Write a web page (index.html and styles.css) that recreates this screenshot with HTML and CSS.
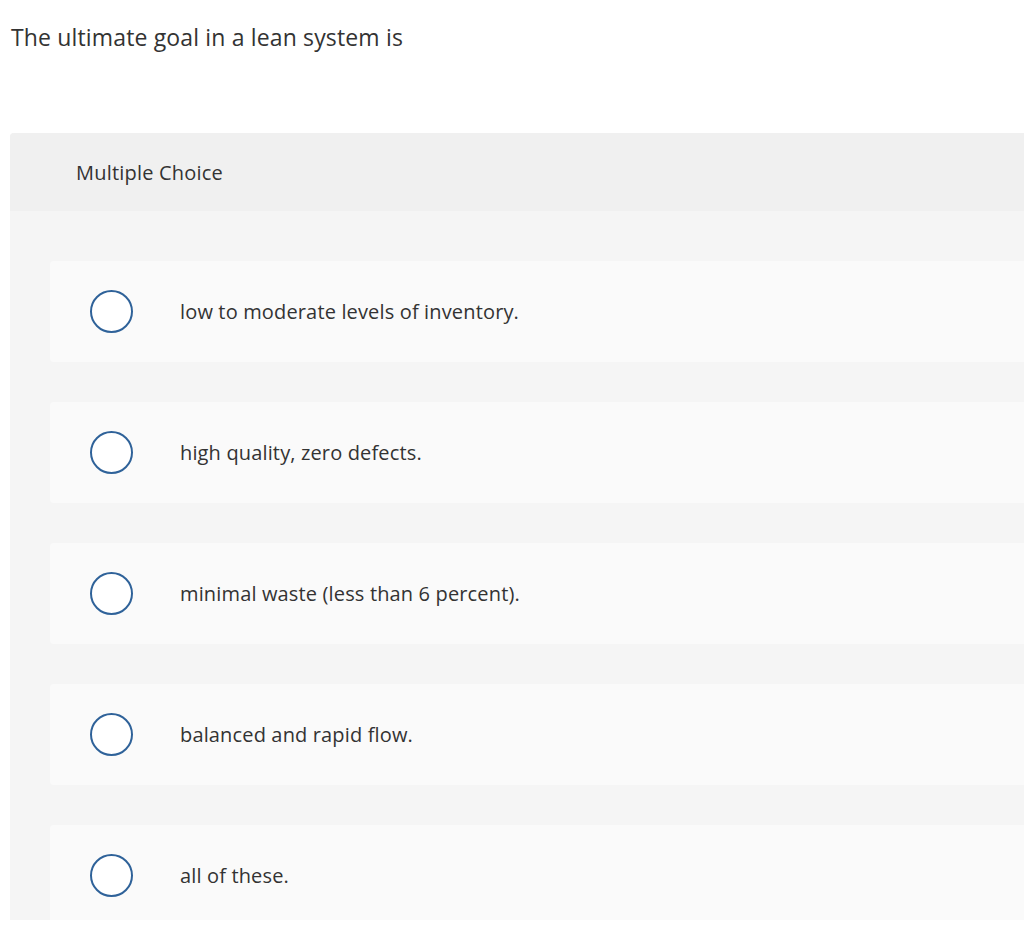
FILE: index.html
```html
<!DOCTYPE html>
<html>
<head>
<meta charset="utf-8">
<link rel="stylesheet" href="styles.css">
</head>
<body>
<div class="page">
  <p class="prompt">The ultimate goal in a lean system is</p>
  <div class="panel">
    <div class="panel-head">Multiple Choice</div>
    <div class="panel-body">
      <div class="choice"><span class="radio"></span><span class="label">low to moderate levels of inventory.</span></div>
      <div class="choice"><span class="radio"></span><span class="label">high quality, zero defects.</span></div>
      <div class="choice"><span class="radio"></span><span class="label">minimal waste (less than 6 percent).</span></div>
      <div class="choice"><span class="radio"></span><span class="label">balanced and rapid flow.</span></div>
      <div class="choice"><span class="radio"></span><span class="label">all of these.</span></div>
    </div>
  </div>
</div>
</body>
</html>
```
FILE: styles.css
```css
html, body {
  margin: 0;
  padding: 0;
  background: #ffffff;
}
body {
  font-family: "Open Sans", Lato, "Liberation Sans", sans-serif;
  color: #333333;
  overflow: hidden;
}
.page {
  width: 1024px;
  height: 931px;
  overflow: hidden;
}
.prompt {
  margin: 0;
  padding: 22px 0 0 11px;
  font-size: 23px;
  letter-spacing: 0.15px;
  line-height: 30px;
  height: 133px;
  box-sizing: border-box;
}
.panel {
  margin-left: 10px;
  width: 1030px;
  height: 787px;
  overflow: hidden;
  border-radius: 4px 0 0 0;
  background: #f5f5f5;
}
.panel-head {
  background: #f0f0f0;
  height: 78px;
  box-sizing: border-box;
  padding-left: 66px;
  display: flex;
  align-items: center;
  font-size: 20px;
  letter-spacing: 0.2px;
}
.panel-body {
  padding: 50px 0 0 40px;
  display: flex;
  flex-direction: column;
  gap: 40px;
}
.choice {
  background: #fafafa;
  border-radius: 4px 0 0 4px;
  height: 101px;
  display: flex;
  align-items: center;
  padding-left: 40px;
  box-sizing: border-box;
}
.radio {
  width: 43px;
  height: 43px;
  box-sizing: border-box;
  border: 2px solid #2f6299;
  border-radius: 50%;
  background: #ffffff;
  flex: none;
}
.label {
  margin-left: 47px;
  font-size: 20px;
  letter-spacing: 0.15px;
  color: #333333;
}
```
